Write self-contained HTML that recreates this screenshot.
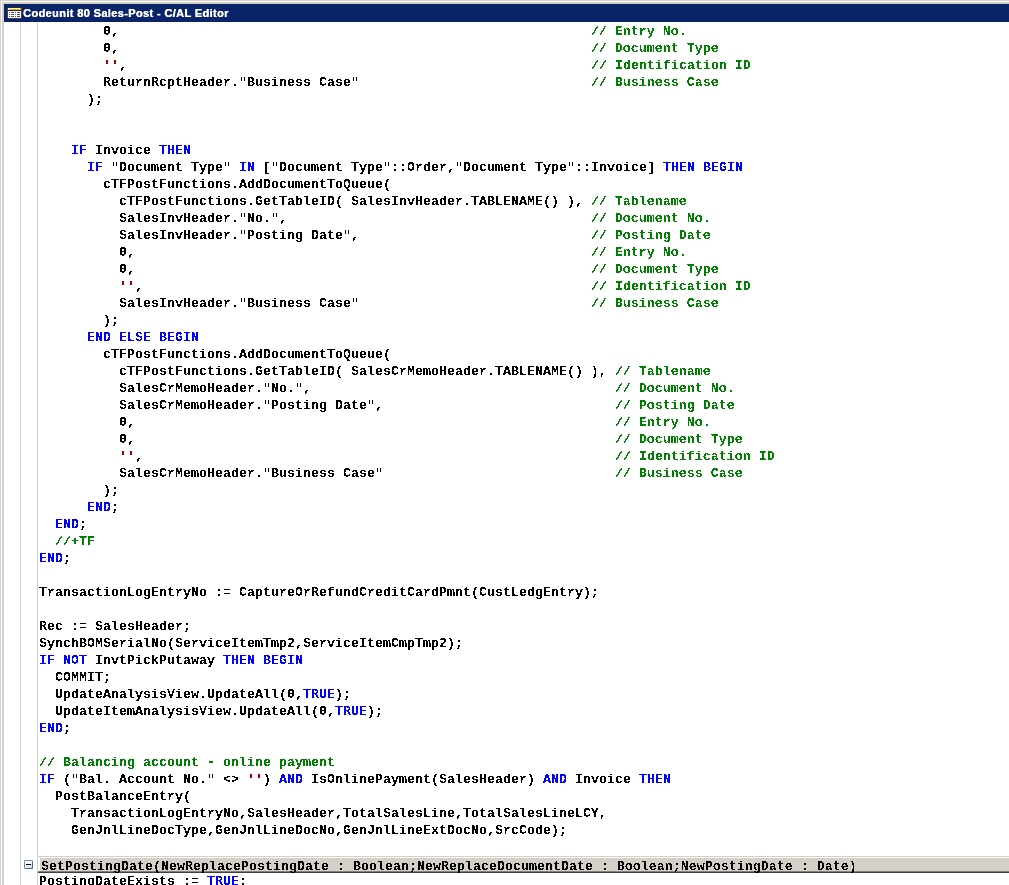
<!DOCTYPE html>
<html><head><meta charset="utf-8"><title>Codeunit 80 Sales-Post - C/AL Editor</title>
<style>
html,body{margin:0;padding:0;}
body{width:1009px;height:885px;overflow:hidden;background:#fff;position:relative;font-family:"Liberation Mono",monospace;}
.abs{position:absolute;}
#bt{left:0;top:0;width:1009px;height:1px;background:#d4d0c8;}
#bt2{left:1px;top:1px;width:1008px;height:1px;background:#fff;}
#bt3{left:2px;top:2px;width:1007px;height:2px;background:#d4d0c8;}
#bl{left:0;top:0;width:1px;height:885px;background:#d4d0c8;}
#bl2{left:1px;top:1px;width:1px;height:884px;background:#fff;}
#bl3{left:2px;top:2px;width:2px;height:883px;background:#d4d0c8;}
#title{left:4px;top:4px;width:1005px;height:18px;background:#0a246a;}
#ttext{left:23px;top:6px;height:14px;color:#fff;font:bold 11px/14px "Liberation Sans",sans-serif;white-space:pre;letter-spacing:0.37px;filter:brightness(1);text-shadow:0.35px 0 0 #fff;}
#v1{left:20px;top:22px;width:1px;height:863px;background:#d4d0c8;}
#v2{left:37px;top:22px;width:1px;height:863px;background:#d4d0c8;}
.l{position:absolute;left:39px;height:17px;line-height:17px;font:bold 13.3333px/17px "Liberation Mono",monospace;white-space:pre;color:#000;}
.k{color:#0000ff;}
.c{color:#008000;}
.s{color:#a00000;}
#hdr{left:38px;top:856px;width:971px;height:17px;background:#d4d0c8;overflow:hidden;}
#hdr .hl{position:absolute;left:0;top:1px;width:971px;height:1px;background:#fff;}
#hdr .hl2{position:absolute;left:0;top:1px;width:2px;height:14px;background:#fff;}
#hdr .d1{position:absolute;left:0;top:15px;width:971px;height:1px;background:#808080;}
#hdr .d2{position:absolute;left:0;top:16px;width:971px;height:1px;background:#404040;}
#hdr .t{position:absolute;left:3px;top:2px;font:bold 13.3333px/17px "Liberation Mono",monospace;white-space:pre;color:#000;}
#fold{left:24px;top:860px;width:7px;height:7px;border:1px solid #6f8fc4;border-right-color:#4a6aa6;border-bottom-color:#4a6aa6;background:linear-gradient(135deg,#fff 0%,#fff 45%,#c4c8e6 100%);border-radius:1.5px;}
#fold i{position:absolute;left:1px;top:3px;width:5px;height:1px;background:#000;}
#code{position:absolute;left:0;top:0;width:1009px;height:885px;filter:url(#thr);}
#hdr .t{filter:url(#thr);}
</style></head><body>
<svg width="0" height="0" style="position:absolute"><defs><filter id="thr" x="0" y="0" width="100%" height="100%" color-interpolation-filters="sRGB"><feComponentTransfer><feFuncA type="discrete" tableValues="0 0 1 1"/></feComponentTransfer></filter><filter id="thr2" x="0" y="0" width="100%" height="100%" color-interpolation-filters="sRGB"><feComponentTransfer><feFuncA type="discrete" tableValues="0 1 1"/></feComponentTransfer></filter></defs></svg>
<div class="abs" id="bt"></div><div class="abs" id="bt2"></div><div class="abs" id="bt3"></div>
<div class="abs" id="bl"></div><div class="abs" id="bl2"></div><div class="abs" id="bl3"></div>
<div class="abs" id="title"></div>
<svg class="abs" id="ico" style="left:7px;top:7px" width="15" height="12" viewBox="0 0 15 12" shape-rendering="crispEdges"><rect x="0" y="0" width="15" height="12" fill="#0a246a"/><rect x="1" y="0" width="13" height="1" fill="#2b2a45"/><rect x="0" y="1" width="15" height="10" fill="#4a4636"/><rect x="1" y="11" width="13" height="1" fill="#3f4a3a"/><rect x="1" y="1" width="13" height="1" fill="#ffffb4"/><rect x="1" y="1" width="1" height="1" fill="#ffffff"/><rect x="12" y="1" width="1" height="1" fill="#ffffff"/><rect x="13" y="1" width="1" height="1" fill="#ffb000"/><rect x="1" y="2" width="13" height="1" fill="#ffa800"/><rect x="1" y="2" width="1" height="1" fill="#ffffc0"/><rect x="0" y="3" width="15" height="1" fill="#23245a"/><rect x="1" y="4" width="13" height="7" fill="#ffffff"/><rect x="10" y="4" width="4" height="7" fill="#eef6ee"/><rect x="2" y="5" width="1" height="1" fill="#5a4668"/><rect x="4" y="5" width="3" height="1" fill="#5a4668"/><rect x="8" y="5" width="1" height="1" fill="#5a4668"/><rect x="10" y="5" width="3" height="1" fill="#5a4668"/><rect x="2" y="7" width="1" height="1" fill="#5a4668"/><rect x="4" y="7" width="3" height="1" fill="#5a4668"/><rect x="8" y="7" width="1" height="1" fill="#5a4668"/><rect x="10" y="7" width="3" height="1" fill="#5a4668"/><rect x="2" y="9" width="1" height="1" fill="#5a4668"/><rect x="4" y="9" width="3" height="1" fill="#5a4668"/><rect x="8" y="9" width="1" height="1" fill="#5a4668"/><rect x="10" y="9" width="3" height="1" fill="#5a4668"/><rect x="2" y="5" width="1" height="1" fill="#3f7f70"/><rect x="8" y="7" width="1" height="1" fill="#3f7f70"/><rect x="5" y="7" width="1" height="1" fill="#3f7f70"/><rect x="4" y="9" width="1" height="1" fill="#5a6a20"/></svg>
<div class="abs" id="ttext">Codeunit 80 Sales-Post - C/AL Editor</div>
<div class="abs" id="v1"></div><div class="abs" id="v2"></div>
<div id="code">
<div class="l" style="top:23px">        0,                                                           <span class="c">// Entry No.</span></div>
<div class="l" style="top:40px">        0,                                                           <span class="c">// Document Type</span></div>
<div class="l" style="top:57px">        <span class="s">&#x27;&#x27;</span>,                                                          <span class="c">// Identification ID</span></div>
<div class="l" style="top:74px">        ReturnRcptHeader."Business Case"                             <span class="c">// Business Case</span></div>
<div class="l" style="top:91px">      );</div>
<div class="l" style="top:142px">    <span class="k">IF</span> Invoice <span class="k">THEN</span></div>
<div class="l" style="top:159px">      <span class="k">IF</span> "Document Type" <span class="k">IN</span> ["Document Type"::Order,"Document Type"::Invoice] <span class="k">THEN</span> <span class="k">BEGIN</span></div>
<div class="l" style="top:176px">        cTFPostFunctions.AddDocumentToQueue(</div>
<div class="l" style="top:193px">          cTFPostFunctions.GetTableID( SalesInvHeader.TABLENAME() ), <span class="c">// Tablename</span></div>
<div class="l" style="top:210px">          SalesInvHeader."No.",                                      <span class="c">// Document No.</span></div>
<div class="l" style="top:227px">          SalesInvHeader."Posting Date",                             <span class="c">// Posting Date</span></div>
<div class="l" style="top:244px">          0,                                                         <span class="c">// Entry No.</span></div>
<div class="l" style="top:261px">          0,                                                         <span class="c">// Document Type</span></div>
<div class="l" style="top:278px">          <span class="s">&#x27;&#x27;</span>,                                                        <span class="c">// Identification ID</span></div>
<div class="l" style="top:295px">          SalesInvHeader."Business Case"                             <span class="c">// Business Case</span></div>
<div class="l" style="top:312px">        );</div>
<div class="l" style="top:329px">      <span class="k">END</span> <span class="k">ELSE</span> <span class="k">BEGIN</span></div>
<div class="l" style="top:346px">        cTFPostFunctions.AddDocumentToQueue(</div>
<div class="l" style="top:363px">          cTFPostFunctions.GetTableID( SalesCrMemoHeader.TABLENAME() ), <span class="c">// Tablename</span></div>
<div class="l" style="top:380px">          SalesCrMemoHeader."No.",                                      <span class="c">// Document No.</span></div>
<div class="l" style="top:397px">          SalesCrMemoHeader."Posting Date",                             <span class="c">// Posting Date</span></div>
<div class="l" style="top:414px">          0,                                                            <span class="c">// Entry No.</span></div>
<div class="l" style="top:431px">          0,                                                            <span class="c">// Document Type</span></div>
<div class="l" style="top:448px">          <span class="s">&#x27;&#x27;</span>,                                                           <span class="c">// Identification ID</span></div>
<div class="l" style="top:465px">          SalesCrMemoHeader."Business Case"                             <span class="c">// Business Case</span></div>
<div class="l" style="top:482px">        );</div>
<div class="l" style="top:499px">      <span class="k">END</span>;</div>
<div class="l" style="top:516px">  <span class="k">END</span>;</div>
<div class="l" style="top:533px">  <span class="c">//+TF</span></div>
<div class="l" style="top:550px"><span class="k">END</span>;</div>
<div class="l" style="top:584px">TransactionLogEntryNo := CaptureOrRefundCreditCardPmnt(CustLedgEntry);</div>
<div class="l" style="top:618px">Rec := SalesHeader;</div>
<div class="l" style="top:635px">SynchBOMSerialNo(ServiceItemTmp2,ServiceItemCmpTmp2);</div>
<div class="l" style="top:652px"><span class="k">IF</span> <span class="k">NOT</span> InvtPickPutaway <span class="k">THEN</span> <span class="k">BEGIN</span></div>
<div class="l" style="top:669px">  COMMIT;</div>
<div class="l" style="top:686px">  UpdateAnalysisView.UpdateAll(0,<span class="k">TRUE</span>);</div>
<div class="l" style="top:703px">  UpdateItemAnalysisView.UpdateAll(0,<span class="k">TRUE</span>);</div>
<div class="l" style="top:720px"><span class="k">END</span>;</div>
<div class="l" style="top:754px"><span class="c">// Balancing account - online payment</span></div>
<div class="l" style="top:771px"><span class="k">IF</span> ("Bal. Account No." &lt;&gt; <span class="s">&#x27;&#x27;</span>) <span class="k">AND</span> IsOnlinePayment(SalesHeader) <span class="k">AND</span> Invoice <span class="k">THEN</span></div>
<div class="l" style="top:788px">  PostBalanceEntry(</div>
<div class="l" style="top:805px">    TransactionLogEntryNo,SalesHeader,TotalSalesLine,TotalSalesLineLCY,</div>
<div class="l" style="top:822px">    GenJnlLineDocType,GenJnlLineDocNo,GenJnlLineExtDocNo,SrcCode);</div>
<div class="l" style="top:873px">PostingDateExists := <span class="k">TRUE</span>;</div>
</div>
<div class="abs" id="hdr"><div class="hl"></div><div class="hl2"></div><div class="d1"></div><div class="d2"></div><div class="t">SetPostingDate(NewReplacePostingDate : Boolean;NewReplaceDocumentDate : Boolean;NewPostingDate : Date)</div></div>
<div class="abs" id="fold"><i></i></div>
</body></html>
